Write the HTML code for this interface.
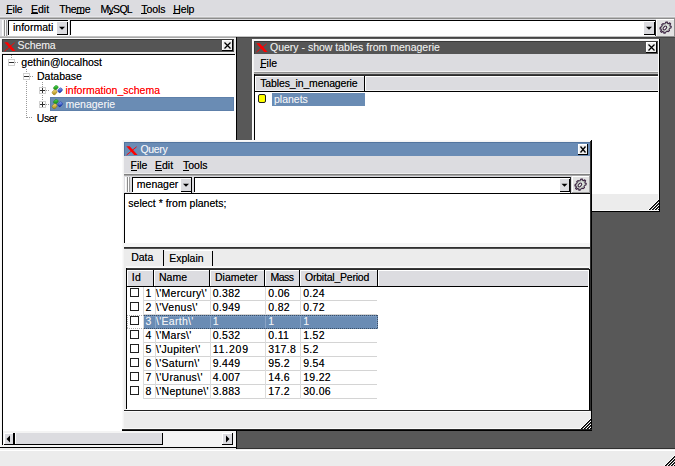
<!DOCTYPE html>
<html><head><meta charset="utf-8"><style>
html,body{margin:0;padding:0;}
body{width:675px;height:466px;overflow:hidden;position:relative;font-family:"Liberation Sans",sans-serif;}
body>div, body>svg{position:absolute;}
.t{white-space:pre;line-height:14px;}
u{text-decoration:underline;text-underline-offset:0.6px;}
</style></head><body>
<div style="left:0px;top:0px;width:675px;height:466px;background:#585858"></div>
<div style="left:0px;top:0px;width:675px;height:19px;background:#dcdce0"></div>
<div style="left:0px;top:16px;width:675px;height:1px;background:#e6e6ea"></div>
<div style="left:0px;top:17px;width:675px;height:1px;background:#bcbcbc"></div>
<div style="left:0px;top:18px;width:675px;height:1px;background:#8e8e8e"></div>
<div style="left:0px;top:19px;width:675px;height:18px;background:#dcdce0"></div>
<div style="left:0px;top:36px;width:675px;height:1px;background:#c4c4c4"></div>
<div style="left:237px;top:37px;width:438px;height:1px;background:#444444"></div>
<div class="t" style="left:6.2px;top:1.76px;color:#000;font-size:10.5px;text-shadow:0 0 0.5px rgba(0,0,0,0.55);letter-spacing:-0.15px">File</div>
<div style="left:6.2px;top:13px;width:5.8px;height:1px;background:#000"></div>
<div class="t" style="left:31px;top:1.76px;color:#000;font-size:10.5px;text-shadow:0 0 0.5px rgba(0,0,0,0.55);">Edit</div>
<div style="left:31.0px;top:13px;width:6.6px;height:1px;background:#000"></div>
<div class="t" style="left:59.3px;top:1.76px;color:#000;font-size:10.5px;text-shadow:0 0 0.5px rgba(0,0,0,0.55);letter-spacing:-0.35px">Theme</div>
<div style="left:76.3px;top:13px;width:8.1px;height:1px;background:#000"></div>
<div class="t" style="left:100.5px;top:1.76px;color:#000;font-size:10.5px;text-shadow:0 0 0.5px rgba(0,0,0,0.55);letter-spacing:-0.7px">MySQL</div>
<div style="left:108.6px;top:13px;width:4.1px;height:1px;background:#000"></div>
<div class="t" style="left:141.3px;top:1.76px;color:#000;font-size:10.5px;text-shadow:0 0 0.5px rgba(0,0,0,0.55);letter-spacing:-0.1px">Tools</div>
<div style="left:141.3px;top:13px;width:5.9px;height:1px;background:#000"></div>
<div class="t" style="left:173.3px;top:1.76px;color:#000;font-size:10.5px;text-shadow:0 0 0.5px rgba(0,0,0,0.55);letter-spacing:-0.15px">Help</div>
<div style="left:173.3px;top:13px;width:7.0px;height:1px;background:#000"></div>
<div style="left:2px;top:20px;width:1px;height:16px;background:#ffffff"></div>
<div style="left:3px;top:20px;width:1px;height:16px;background:#f0f0f0"></div>
<div style="left:4px;top:20px;width:1px;height:16px;background:#8c8c8c"></div>
<div style="left:5px;top:20px;width:1px;height:16px;background:#ffffff"></div>
<div style="left:6px;top:20px;width:1px;height:16px;background:#9c9c9c"></div>
<div style="left:8px;top:20px;width:61px;height:16px;background:#fff"></div>
<div style="left:8px;top:20px;width:61px;height:1px;background:#000"></div>
<div style="left:8px;top:20px;width:1px;height:16px;background:#000"></div>
<div style="left:8px;top:35px;width:61px;height:1px;background:#fff"></div>
<div style="left:68px;top:20px;width:1px;height:16px;background:#fff"></div>
<div class="t" style="left:13px;top:19.96px;color:#000;font-size:10.5px;text-shadow:0 0 0.5px rgba(0,0,0,0.55);">informati</div>
<div style="left:57px;top:22px;width:11px;height:13px;background:#dcdce0"></div>
<div style="left:57px;top:34px;width:11px;height:1px;background:#000"></div>
<div style="left:67px;top:22px;width:1px;height:13px;background:#000"></div>
<svg style="left:57px;top:22px" width="11" height="13" viewBox="0 0 11 13"><path d="M2.0 4.7 L8.0 4.7 L5.0 7.7 Z" fill="#000"/></svg>
<div style="left:70px;top:20px;width:586px;height:16px;background:#fff"></div>
<div style="left:70px;top:20px;width:586px;height:1px;background:#000"></div>
<div style="left:70px;top:20px;width:1px;height:16px;background:#000"></div>
<div style="left:70px;top:35px;width:586px;height:1px;background:#fff"></div>
<div style="left:655px;top:20px;width:1px;height:16px;background:#fff"></div>
<div style="left:655px;top:20px;width:1px;height:16px;background:#202020"></div>
<div style="left:644px;top:22px;width:11px;height:13px;background:#dcdce0"></div>
<div style="left:644px;top:34px;width:11px;height:1px;background:#000"></div>
<div style="left:654px;top:22px;width:1px;height:13px;background:#000"></div>
<svg style="left:644px;top:22px" width="11" height="13" viewBox="0 0 11 13"><path d="M2.0 4.7 L8.0 4.7 L5.0 7.7 Z" fill="#000"/></svg>
<div style="left:656px;top:19px;width:19px;height:18px;background:#e2e2e2"></div>
<div style="left:656px;top:19px;width:19px;height:1px;background:#fff"></div>
<div style="left:656px;top:19px;width:1px;height:18px;background:#fff"></div>
<div style="left:656px;top:36px;width:19px;height:1px;background:#909090"></div>
<div style="left:674px;top:19px;width:1px;height:18px;background:#909090"></div>
<svg style="left:659px;top:21px" width="14" height="14" viewBox="0 0 14 14"><polygon points="11.14,2.37 11.34,2.61 11.52,2.86 11.10,3.52 10.64,4.13 10.73,4.36 10.80,4.60 10.85,4.85 10.88,5.10 11.53,5.18 12.15,5.35 12.13,5.70 12.08,6.05 12.01,6.41 11.91,6.76 11.20,7.06 10.51,7.28 10.38,7.55 10.24,7.81 10.08,8.08 9.91,8.33 10.18,8.87 10.38,9.47 10.10,9.76 9.81,10.05 9.51,10.32 9.19,10.57 8.61,10.33 8.09,10.03 7.83,10.18 7.55,10.32 7.28,10.44 7.00,10.55 6.73,11.23 6.39,11.91 6.02,11.98 5.66,12.03 5.31,12.05 4.96,12.05 4.84,11.42 4.80,10.77 4.55,10.72 4.31,10.64 4.07,10.56 3.85,10.45 3.21,10.87 2.52,11.24 2.28,11.04 2.06,10.83 1.86,10.59 1.68,10.34 2.10,9.68 2.56,9.07 2.47,8.84 2.40,8.60 2.35,8.35 2.32,8.10 1.67,8.02 1.05,7.85 1.07,7.50 1.12,7.15 1.19,6.79 1.29,6.44 2.00,6.14 2.69,5.92 2.82,5.65 2.96,5.39 3.12,5.12 3.29,4.87 3.02,4.33 2.82,3.73 3.10,3.44 3.39,3.15 3.69,2.88 4.01,2.63 4.59,2.87 5.11,3.17 5.37,3.02 5.65,2.88 5.92,2.76 6.20,2.65 6.47,1.97 6.81,1.29 7.18,1.22 7.54,1.17 7.89,1.15 8.24,1.15 8.36,1.78 8.40,2.43 8.65,2.48 8.89,2.56 9.13,2.64 9.35,2.75 9.99,2.33 10.68,1.96 10.92,2.16" fill="#dfe5df" stroke="#3c2442" stroke-width="1.25"/><ellipse cx="6.6" cy="6.6" rx="4.2" ry="3.2" transform="rotate(-43 6.6 6.6)" fill="none" stroke="#c0c8c0" stroke-width="0.8"/><ellipse cx="5.9" cy="7.0" rx="2.3" ry="1.3" transform="rotate(-48 5.9 7.0)" fill="#f4f6f4" stroke="#3a2440" stroke-width="1.1"/></svg>
<div style="left:0px;top:448px;width:675px;height:1px;background:#303030"></div>
<div style="left:0px;top:449px;width:675px;height:17px;background:#ececec"></div>
<div style="left:0px;top:450px;width:675px;height:1px;background:#ffffff"></div>
<svg style="left:664px;top:455px" width="11" height="11" viewBox="0 0 11 11"><g shape-rendering="crispEdges"><rect x="10" y="0" width="1" height="1" fill="#ffffff"/><rect x="9" y="1" width="1" height="1" fill="#ffffff"/><rect x="10" y="1" width="1" height="1" fill="#000000"/><rect x="8" y="2" width="1" height="1" fill="#ffffff"/><rect x="9" y="2" width="1" height="1" fill="#000000"/><rect x="10" y="2" width="1" height="1" fill="#404040"/><rect x="7" y="3" width="1" height="1" fill="#ffffff"/><rect x="8" y="3" width="1" height="1" fill="#000000"/><rect x="9" y="3" width="1" height="1" fill="#404040"/><rect x="10" y="3" width="1" height="1" fill="#ffffff"/><rect x="6" y="4" width="1" height="1" fill="#ffffff"/><rect x="7" y="4" width="1" height="1" fill="#000000"/><rect x="8" y="4" width="1" height="1" fill="#404040"/><rect x="9" y="4" width="1" height="1" fill="#ffffff"/><rect x="10" y="4" width="1" height="1" fill="#000000"/><rect x="5" y="5" width="1" height="1" fill="#ffffff"/><rect x="6" y="5" width="1" height="1" fill="#000000"/><rect x="7" y="5" width="1" height="1" fill="#404040"/><rect x="8" y="5" width="1" height="1" fill="#ffffff"/><rect x="9" y="5" width="1" height="1" fill="#000000"/><rect x="10" y="5" width="1" height="1" fill="#404040"/><rect x="4" y="6" width="1" height="1" fill="#ffffff"/><rect x="5" y="6" width="1" height="1" fill="#000000"/><rect x="6" y="6" width="1" height="1" fill="#404040"/><rect x="7" y="6" width="1" height="1" fill="#ffffff"/><rect x="8" y="6" width="1" height="1" fill="#000000"/><rect x="9" y="6" width="1" height="1" fill="#404040"/><rect x="10" y="6" width="1" height="1" fill="#ffffff"/><rect x="3" y="7" width="1" height="1" fill="#ffffff"/><rect x="4" y="7" width="1" height="1" fill="#000000"/><rect x="5" y="7" width="1" height="1" fill="#404040"/><rect x="6" y="7" width="1" height="1" fill="#ffffff"/><rect x="7" y="7" width="1" height="1" fill="#000000"/><rect x="8" y="7" width="1" height="1" fill="#404040"/><rect x="9" y="7" width="1" height="1" fill="#ffffff"/><rect x="10" y="7" width="1" height="1" fill="#000000"/><rect x="2" y="8" width="1" height="1" fill="#ffffff"/><rect x="3" y="8" width="1" height="1" fill="#000000"/><rect x="4" y="8" width="1" height="1" fill="#404040"/><rect x="5" y="8" width="1" height="1" fill="#ffffff"/><rect x="6" y="8" width="1" height="1" fill="#000000"/><rect x="7" y="8" width="1" height="1" fill="#404040"/><rect x="8" y="8" width="1" height="1" fill="#ffffff"/><rect x="9" y="8" width="1" height="1" fill="#000000"/><rect x="10" y="8" width="1" height="1" fill="#404040"/><rect x="1" y="9" width="1" height="1" fill="#ffffff"/><rect x="2" y="9" width="1" height="1" fill="#000000"/><rect x="3" y="9" width="1" height="1" fill="#404040"/><rect x="4" y="9" width="1" height="1" fill="#ffffff"/><rect x="5" y="9" width="1" height="1" fill="#000000"/><rect x="6" y="9" width="1" height="1" fill="#404040"/><rect x="7" y="9" width="1" height="1" fill="#ffffff"/><rect x="8" y="9" width="1" height="1" fill="#000000"/><rect x="9" y="9" width="1" height="1" fill="#404040"/><rect x="10" y="9" width="1" height="1" fill="#ffffff"/><rect x="0" y="10" width="1" height="1" fill="#ffffff"/><rect x="1" y="10" width="1" height="1" fill="#000000"/><rect x="2" y="10" width="1" height="1" fill="#404040"/><rect x="3" y="10" width="1" height="1" fill="#ffffff"/><rect x="4" y="10" width="1" height="1" fill="#000000"/><rect x="5" y="10" width="1" height="1" fill="#404040"/><rect x="6" y="10" width="1" height="1" fill="#ffffff"/><rect x="7" y="10" width="1" height="1" fill="#000000"/><rect x="8" y="10" width="1" height="1" fill="#404040"/><rect x="9" y="10" width="1" height="1" fill="#ffffff"/><rect x="10" y="10" width="1" height="1" fill="#000000"/></g></svg>
<div style="left:0px;top:37px;width:237px;height:412px;background:#ececec"></div>
<div style="left:0px;top:37px;width:237px;height:1px;background:#a8a8a8"></div>
<div style="left:0px;top:38px;width:237px;height:1px;background:#fafafa"></div>
<div style="left:0px;top:38px;width:1px;height:410px;background:#fafafa"></div>
<div style="left:1px;top:38px;width:1px;height:410px;background:#f4f4f4"></div>
<div style="left:236px;top:37px;width:1px;height:412px;background:#000"></div>
<div style="left:0px;top:447px;width:237px;height:1px;background:#000"></div>
<div style="left:2px;top:39px;width:232px;height:13px;background:#555555"></div>
<div style="left:2px;top:39px;width:232px;height:1px;background:#3a3a3a"></div>
<div style="left:2px;top:39px;width:1px;height:13px;background:#3a3a3a"></div>
<svg style="left:3.5px;top:41.5px" width="12" height="10" viewBox="0 0 12 10"><path d="M0.3 0.3 L3.7 0.3 L11.6 9.1 L8.2 9.1 Z" fill="#f00"/><path d="M10.6 0.8 L0.6 9" stroke="#f00" stroke-width="0.95"/></svg>
<div class="t" style="left:17.6px;top:38.36px;color:#e8e8e8;font-size:10.5px;text-shadow:0 0 0.5px rgba(232,232,232,0.55);letter-spacing:-0.1px">Schema</div>
<div style="left:222px;top:40px;width:11px;height:11px;background:#eeeeee"></div>
<div style="left:222px;top:40px;width:11px;height:1px;background:#fff"></div>
<div style="left:222px;top:40px;width:1px;height:11px;background:#fff"></div>
<div style="left:222px;top:50px;width:11px;height:1px;background:#000"></div>
<div style="left:232px;top:40px;width:1px;height:11px;background:#000"></div>
<svg style="left:222px;top:40px" width="11" height="11" viewBox="0 0 11 11"><path d="M2.5 2.5 L8.5 8.5 M8.5 2.5 L2.5 8.5" stroke="#000" stroke-width="1.3"/></svg>
<div style="left:2px;top:54px;width:234px;height:391px;background:#fff"></div>
<div style="left:2px;top:52px;width:232px;height:1px;background:#f4f4f4"></div>
<div style="left:2px;top:53px;width:232px;height:1px;background:#e8e8e8"></div>
<div style="left:2px;top:54px;width:233px;height:1px;background:#000"></div>
<div style="left:2px;top:54px;width:1px;height:391px;background:#000"></div>
<div style="left:11px;top:55px;width:1px;height:4px;background:repeating-linear-gradient(to bottom,#9a9a9a 0 1px,transparent 1px 2px)"></div>
<div style="left:8px;top:59px;width:7px;height:7px;background:#fff;border:1px solid #d0d0d0;box-sizing:border-box"></div>
<div style="left:9px;top:62px;width:5px;height:1px;background:#303030"></div>
<div style="left:15px;top:62px;width:4px;height:1px;background:repeating-linear-gradient(to right,#9a9a9a 0 1px,transparent 1px 2px)"></div>
<div class="t" style="left:21.3px;top:55.06px;color:#000;font-size:10.5px;text-shadow:0 0 0.5px rgba(0,0,0,0.55);">gethin@localhost</div>
<div style="left:26px;top:69px;width:1px;height:4px;background:repeating-linear-gradient(to bottom,#9a9a9a 0 1px,transparent 1px 2px)"></div>
<div style="left:23px;top:73px;width:7px;height:7px;background:#fff;border:1px solid #d0d0d0;box-sizing:border-box"></div>
<div style="left:24px;top:76px;width:5px;height:1px;background:#303030"></div>
<div style="left:30px;top:76px;width:4px;height:1px;background:repeating-linear-gradient(to right,#9a9a9a 0 1px,transparent 1px 2px)"></div>
<div class="t" style="left:37px;top:68.86px;color:#000;font-size:10.5px;text-shadow:0 0 0.5px rgba(0,0,0,0.55);">Database</div>
<div style="left:26px;top:81px;width:1px;height:37px;background:repeating-linear-gradient(to bottom,#9a9a9a 0 1px,transparent 1px 2px)"></div>
<div style="left:27px;top:117px;width:6px;height:1px;background:repeating-linear-gradient(to right,#9a9a9a 0 1px,transparent 1px 2px)"></div>
<div style="left:42px;top:82px;width:1px;height:5px;background:repeating-linear-gradient(to bottom,#9a9a9a 0 1px,transparent 1px 2px)"></div>
<div style="left:39px;top:87px;width:7px;height:7px;background:#fff;border:1px solid #d0d0d0;box-sizing:border-box"></div>
<div style="left:40px;top:90px;width:5px;height:1px;background:#303030"></div>
<div style="left:42px;top:88px;width:1px;height:5px;background:#303030"></div>
<div style="left:46px;top:90px;width:4px;height:1px;background:repeating-linear-gradient(to right,#9a9a9a 0 1px,transparent 1px 2px)"></div>
<div style="left:42px;top:95px;width:1px;height:6px;background:repeating-linear-gradient(to bottom,#9a9a9a 0 1px,transparent 1px 2px)"></div>
<div style="left:39px;top:101px;width:7px;height:7px;background:#fff;border:1px solid #d0d0d0;box-sizing:border-box"></div>
<div style="left:40px;top:104px;width:5px;height:1px;background:#303030"></div>
<div style="left:42px;top:102px;width:1px;height:5px;background:#303030"></div>
<div style="left:46px;top:104px;width:4px;height:1px;background:repeating-linear-gradient(to right,#9a9a9a 0 1px,transparent 1px 2px)"></div>
<svg style="left:50.5px;top:85px" width="13" height="12" viewBox="0 0 13 12"><defs><linearGradient id="gg" x1="0" y1="0" x2="1" y2="1"><stop offset="0" stop-color="#5ee05e"/><stop offset="1" stop-color="#008000"/></linearGradient><linearGradient id="gb" x1="0" y1="0" x2="1" y2="1"><stop offset="0" stop-color="#9ab8ff"/><stop offset="1" stop-color="#0020a0"/></linearGradient><linearGradient id="gy" x1="0" y1="0" x2="1" y2="1"><stop offset="0" stop-color="#ffe890"/><stop offset="1" stop-color="#a08000"/></linearGradient></defs><rect x="3.05" y="0.25" width="3.6" height="4.8" rx="1.5" transform="rotate(45 4.85 2.65)" fill="url(#gg)" stroke="#107010" stroke-width="0.4"/><rect x="7.3" y="2.85" width="3.6" height="4.8" rx="1.5" transform="rotate(45 9.1 5.25)" fill="url(#gb)" stroke="#001890" stroke-width="0.4"/><rect x="1.6" y="4.7" width="4" height="5" rx="1.7" transform="rotate(45 3.6 7.2)" fill="url(#gy)" stroke="#806000" stroke-width="0.4"/></svg>
<div class="t" style="left:65.5px;top:82.96px;color:#ff0000;font-size:10.5px;text-shadow:0 0 0.5px rgba(255,0,0,0.55);">information_schema</div>
<div style="left:50px;top:97px;width:184px;height:14px;background:#6a8cb4;border:1px solid #5e80aa;box-sizing:border-box"></div>
<svg style="left:50.5px;top:99px" width="13" height="12" viewBox="0 0 13 12"><defs><linearGradient id="gg" x1="0" y1="0" x2="1" y2="1"><stop offset="0" stop-color="#5ee05e"/><stop offset="1" stop-color="#008000"/></linearGradient><linearGradient id="gb" x1="0" y1="0" x2="1" y2="1"><stop offset="0" stop-color="#9ab8ff"/><stop offset="1" stop-color="#0020a0"/></linearGradient><linearGradient id="gy" x1="0" y1="0" x2="1" y2="1"><stop offset="0" stop-color="#ffe890"/><stop offset="1" stop-color="#a08000"/></linearGradient></defs><rect x="3.05" y="0.25" width="3.6" height="4.8" rx="1.5" transform="rotate(45 4.85 2.65)" fill="url(#gg)" stroke="#107010" stroke-width="0.4"/><rect x="7.3" y="2.85" width="3.6" height="4.8" rx="1.5" transform="rotate(45 9.1 5.25)" fill="url(#gb)" stroke="#001890" stroke-width="0.4"/><rect x="1.6" y="4.7" width="4" height="5" rx="1.7" transform="rotate(45 3.6 7.2)" fill="url(#gy)" stroke="#806000" stroke-width="0.4"/></svg>
<div class="t" style="left:65.5px;top:96.96px;color:#eef0f4;font-size:10.5px;text-shadow:0 0 0.5px rgba(238,240,244,0.55);">menagerie</div>
<div class="t" style="left:36.8px;top:110.86px;color:#000;font-size:10.5px;text-shadow:0 0 0.5px rgba(0,0,0,0.55);letter-spacing:-0.45px">User</div>
<div style="left:3px;top:431px;width:233px;height:16px;background:#f4f4f4"></div>
<div style="left:4px;top:433px;width:10px;height:12px;background:#dcdce0"></div>
<div style="left:4px;top:433px;width:10px;height:1px;background:#fff"></div>
<div style="left:4px;top:433px;width:1px;height:12px;background:#fff"></div>
<div style="left:4px;top:444px;width:10px;height:1px;background:#000"></div>
<div style="left:13px;top:433px;width:1px;height:12px;background:#000"></div>
<svg style="left:4px;top:433px" width="10" height="12" viewBox="0 0 10 12"><path d="M2.5 6 L6 2.5 L6 9.5 Z" fill="#000"/></svg>
<div style="left:14px;top:433px;width:149px;height:12px;background:#dcdce0"></div>
<div style="left:14px;top:433px;width:1px;height:12px;background:#000"></div>
<div style="left:15px;top:433px;width:1px;height:12px;background:#fff"></div>
<div style="left:14px;top:444px;width:149px;height:1px;background:#000"></div>
<div style="left:162px;top:433px;width:1px;height:12px;background:#000"></div>
<div style="left:222px;top:433px;width:11px;height:12px;background:#dcdce0"></div>
<div style="left:222px;top:433px;width:11px;height:1px;background:#fff"></div>
<div style="left:222px;top:433px;width:1px;height:12px;background:#fff"></div>
<div style="left:222px;top:444px;width:11px;height:1px;background:#000"></div>
<div style="left:232px;top:433px;width:1px;height:12px;background:#000"></div>
<svg style="left:222px;top:433px" width="11" height="12" viewBox="0 0 11 12"><path d="M7.5 6 L4 2.5 L4 9.5 Z" fill="#000"/></svg>
<div style="left:252px;top:39px;width:408px;height:173px;background:#ececec"></div>
<div style="left:252px;top:39px;width:407px;height:1px;background:#fafafa"></div>
<div style="left:252px;top:40px;width:407px;height:1px;background:#f4f4f4"></div>
<div style="left:252px;top:39px;width:1px;height:172px;background:#fafafa"></div>
<div style="left:253px;top:39px;width:1px;height:172px;background:#f4f4f4"></div>
<div style="left:659px;top:39px;width:1px;height:173px;background:#000"></div>
<div style="left:658px;top:40px;width:1px;height:171px;background:#fafafa"></div>
<div style="left:252px;top:211px;width:408px;height:1px;background:#000"></div>
<div style="left:253px;top:210px;width:406px;height:1px;background:#fafafa"></div>
<div style="left:254px;top:41px;width:404px;height:13px;background:#555555"></div>
<div style="left:254px;top:41px;width:404px;height:1px;background:#3a3a3a"></div>
<div style="left:254px;top:41px;width:1px;height:13px;background:#3a3a3a"></div>
<svg style="left:255.5px;top:43px" width="12" height="10" viewBox="0 0 12 10"><path d="M0.3 0.3 L3.7 0.3 L11.6 9.1 L8.2 9.1 Z" fill="#f00"/><path d="M10.6 0.8 L0.6 9" stroke="#f00" stroke-width="0.95"/></svg>
<div class="t" style="left:270px;top:39.96px;color:#e8e8e8;font-size:10.5px;text-shadow:0 0 0.5px rgba(232,232,232,0.55);">Query - show tables from menagerie</div>
<div style="left:646px;top:42px;width:11px;height:11px;background:#eeeeee"></div>
<div style="left:646px;top:42px;width:11px;height:1px;background:#fff"></div>
<div style="left:646px;top:42px;width:1px;height:11px;background:#fff"></div>
<div style="left:646px;top:52px;width:11px;height:1px;background:#000"></div>
<div style="left:656px;top:42px;width:1px;height:11px;background:#000"></div>
<svg style="left:646px;top:42px" width="11" height="11" viewBox="0 0 11 11"><path d="M2.5 2.5 L8.5 8.5 M8.5 2.5 L2.5 8.5" stroke="#000" stroke-width="1.3"/></svg>
<div style="left:254px;top:54px;width:404px;height:17px;background:#dcdce0"></div>
<div class="t" style="left:260.2px;top:55.66px;color:#000;font-size:10.5px;text-shadow:0 0 0.5px rgba(0,0,0,0.55);">File</div>
<div style="left:260.2px;top:67px;width:6.0px;height:1px;background:#000"></div>
<div style="left:254px;top:71px;width:404px;height:1px;background:#f0f0f0"></div>
<div style="left:254px;top:72px;width:404px;height:1px;background:#8e8e8e"></div>
<div style="left:254px;top:73px;width:404px;height:1px;background:#b8b8b8"></div>
<div style="left:254px;top:75px;width:404px;height:119px;background:#fff"></div>
<div style="left:254px;top:74px;width:404px;height:1px;background:#404040"></div>
<div style="left:254px;top:75px;width:404px;height:1px;background:#2a2a2a"></div>
<div style="left:254px;top:74px;width:1px;height:120px;background:#000"></div>
<div style="left:255px;top:76px;width:403px;height:15px;background:#dcdce0"></div>
<div style="left:255px;top:76px;width:403px;height:1px;background:#fff"></div>
<div style="left:255px;top:90px;width:403px;height:1px;background:#f4f4f4"></div>
<div style="left:255px;top:91px;width:403px;height:1px;background:#000"></div>
<div style="left:255px;top:76px;width:1px;height:15px;background:#fff"></div>
<div style="left:364px;top:76px;width:1px;height:15px;background:#000"></div>
<div style="left:365px;top:76px;width:1px;height:15px;background:#fff"></div>
<div class="t" style="left:260.2px;top:76.26px;color:#000;font-size:10.5px;text-shadow:0 0 0.5px rgba(0,0,0,0.55);letter-spacing:-0.13px">Tables_in_menagerie</div>
<div style="left:258px;top:94px;width:8px;height:9px;background:#ffff00;border:1px solid #202020;box-sizing:border-box;border-radius:2px"></div>
<div style="left:272px;top:93px;width:93px;height:13px;background:#6a8cb4"></div>
<div class="t" style="left:274px;top:92.36px;color:#eef0f4;font-size:10.5px;text-shadow:0 0 0.5px rgba(238,240,244,0.55);">planets</div>
<svg style="left:648px;top:199px" width="11" height="11" viewBox="0 0 11 11"><g shape-rendering="crispEdges"><rect x="10" y="0" width="1" height="1" fill="#ffffff"/><rect x="9" y="1" width="1" height="1" fill="#ffffff"/><rect x="10" y="1" width="1" height="1" fill="#000000"/><rect x="8" y="2" width="1" height="1" fill="#ffffff"/><rect x="9" y="2" width="1" height="1" fill="#000000"/><rect x="10" y="2" width="1" height="1" fill="#404040"/><rect x="7" y="3" width="1" height="1" fill="#ffffff"/><rect x="8" y="3" width="1" height="1" fill="#000000"/><rect x="9" y="3" width="1" height="1" fill="#404040"/><rect x="10" y="3" width="1" height="1" fill="#ffffff"/><rect x="6" y="4" width="1" height="1" fill="#ffffff"/><rect x="7" y="4" width="1" height="1" fill="#000000"/><rect x="8" y="4" width="1" height="1" fill="#404040"/><rect x="9" y="4" width="1" height="1" fill="#ffffff"/><rect x="10" y="4" width="1" height="1" fill="#000000"/><rect x="5" y="5" width="1" height="1" fill="#ffffff"/><rect x="6" y="5" width="1" height="1" fill="#000000"/><rect x="7" y="5" width="1" height="1" fill="#404040"/><rect x="8" y="5" width="1" height="1" fill="#ffffff"/><rect x="9" y="5" width="1" height="1" fill="#000000"/><rect x="10" y="5" width="1" height="1" fill="#404040"/><rect x="4" y="6" width="1" height="1" fill="#ffffff"/><rect x="5" y="6" width="1" height="1" fill="#000000"/><rect x="6" y="6" width="1" height="1" fill="#404040"/><rect x="7" y="6" width="1" height="1" fill="#ffffff"/><rect x="8" y="6" width="1" height="1" fill="#000000"/><rect x="9" y="6" width="1" height="1" fill="#404040"/><rect x="10" y="6" width="1" height="1" fill="#ffffff"/><rect x="3" y="7" width="1" height="1" fill="#ffffff"/><rect x="4" y="7" width="1" height="1" fill="#000000"/><rect x="5" y="7" width="1" height="1" fill="#404040"/><rect x="6" y="7" width="1" height="1" fill="#ffffff"/><rect x="7" y="7" width="1" height="1" fill="#000000"/><rect x="8" y="7" width="1" height="1" fill="#404040"/><rect x="9" y="7" width="1" height="1" fill="#ffffff"/><rect x="10" y="7" width="1" height="1" fill="#000000"/><rect x="2" y="8" width="1" height="1" fill="#ffffff"/><rect x="3" y="8" width="1" height="1" fill="#000000"/><rect x="4" y="8" width="1" height="1" fill="#404040"/><rect x="5" y="8" width="1" height="1" fill="#ffffff"/><rect x="6" y="8" width="1" height="1" fill="#000000"/><rect x="7" y="8" width="1" height="1" fill="#404040"/><rect x="8" y="8" width="1" height="1" fill="#ffffff"/><rect x="9" y="8" width="1" height="1" fill="#000000"/><rect x="10" y="8" width="1" height="1" fill="#404040"/><rect x="1" y="9" width="1" height="1" fill="#ffffff"/><rect x="2" y="9" width="1" height="1" fill="#000000"/><rect x="3" y="9" width="1" height="1" fill="#404040"/><rect x="4" y="9" width="1" height="1" fill="#ffffff"/><rect x="5" y="9" width="1" height="1" fill="#000000"/><rect x="6" y="9" width="1" height="1" fill="#404040"/><rect x="7" y="9" width="1" height="1" fill="#ffffff"/><rect x="8" y="9" width="1" height="1" fill="#000000"/><rect x="9" y="9" width="1" height="1" fill="#404040"/><rect x="10" y="9" width="1" height="1" fill="#ffffff"/><rect x="0" y="10" width="1" height="1" fill="#ffffff"/><rect x="1" y="10" width="1" height="1" fill="#000000"/><rect x="2" y="10" width="1" height="1" fill="#404040"/><rect x="3" y="10" width="1" height="1" fill="#ffffff"/><rect x="4" y="10" width="1" height="1" fill="#000000"/><rect x="5" y="10" width="1" height="1" fill="#404040"/><rect x="6" y="10" width="1" height="1" fill="#ffffff"/><rect x="7" y="10" width="1" height="1" fill="#000000"/><rect x="8" y="10" width="1" height="1" fill="#404040"/><rect x="9" y="10" width="1" height="1" fill="#ffffff"/><rect x="10" y="10" width="1" height="1" fill="#000000"/></g></svg>
<div style="left:122px;top:140px;width:470px;height:291px;background:#ececec"></div>
<div style="left:122px;top:140px;width:469px;height:1px;background:#fafafa"></div>
<div style="left:122px;top:141px;width:469px;height:1px;background:#f4f4f4"></div>
<div style="left:122px;top:140px;width:1px;height:290px;background:#fafafa"></div>
<div style="left:123px;top:140px;width:1px;height:290px;background:#f4f4f4"></div>
<div style="left:591px;top:140px;width:1px;height:291px;background:#000"></div>
<div style="left:590px;top:141px;width:1px;height:270px;background:#303030"></div>
<div style="left:122px;top:430px;width:470px;height:1px;background:#000"></div>
<div style="left:122px;top:429px;width:470px;height:1px;background:#282828"></div>
<div style="left:123px;top:428px;width:467px;height:1px;background:#fafafa"></div>
<div style="left:124px;top:142px;width:466px;height:14px;background:#6a8cb5"></div>
<div style="left:124px;top:142px;width:466px;height:1px;background:#52749e"></div>
<div style="left:124px;top:142px;width:1px;height:14px;background:#52749e"></div>
<svg style="left:126px;top:145.5px" width="12" height="10" viewBox="0 0 12 10"><path d="M0.3 0.3 L3.7 0.3 L11.6 9.1 L8.2 9.1 Z" fill="#f00"/><path d="M10.6 0.8 L0.6 9" stroke="#f00" stroke-width="0.95"/></svg>
<div class="t" style="left:140.5px;top:142.36px;color:#f0f2f6;font-size:10.5px;text-shadow:0 0 0.5px rgba(240,242,246,0.55);letter-spacing:-0.35px">Query</div>
<div style="left:578px;top:144px;width:10px;height:11px;background:#eeeeee"></div>
<div style="left:578px;top:144px;width:10px;height:1px;background:#fff"></div>
<div style="left:578px;top:144px;width:1px;height:11px;background:#fff"></div>
<div style="left:578px;top:154px;width:10px;height:1px;background:#000"></div>
<div style="left:587px;top:144px;width:1px;height:11px;background:#000"></div>
<svg style="left:578px;top:144px" width="10" height="11" viewBox="0 0 10 11"><path d="M2.5 2.5 L7.5 8.5 M7.5 2.5 L2.5 8.5" stroke="#000" stroke-width="1.3"/></svg>
<div style="left:124px;top:156px;width:466px;height:17px;background:#dcdce0"></div>
<div class="t" style="left:130.5px;top:157.66px;color:#000;font-size:10.5px;text-shadow:0 0 0.5px rgba(0,0,0,0.55);">File</div>
<div style="left:130.5px;top:170px;width:6.0px;height:1px;background:#000"></div>
<div class="t" style="left:155px;top:157.66px;color:#000;font-size:10.5px;text-shadow:0 0 0.5px rgba(0,0,0,0.55);">Edit</div>
<div style="left:155.0px;top:170px;width:6.6px;height:1px;background:#000"></div>
<div class="t" style="left:183px;top:157.66px;color:#000;font-size:10.5px;text-shadow:0 0 0.5px rgba(0,0,0,0.55);">Tools</div>
<div style="left:183.0px;top:170px;width:6.0px;height:1px;background:#000"></div>
<div style="left:124px;top:173px;width:466px;height:1px;background:#eeeeee"></div>
<div style="left:124px;top:174px;width:466px;height:1px;background:#808080"></div>
<div style="left:124px;top:175px;width:466px;height:1px;background:#a8a8a8"></div>
<div style="left:124px;top:176px;width:466px;height:17px;background:#dcdce0"></div>
<div style="left:125px;top:177px;width:1px;height:15px;background:#ffffff"></div>
<div style="left:126px;top:177px;width:1px;height:15px;background:#f0f0f0"></div>
<div style="left:127px;top:177px;width:1px;height:15px;background:#8c8c8c"></div>
<div style="left:128px;top:177px;width:1px;height:15px;background:#ffffff"></div>
<div style="left:129px;top:177px;width:1px;height:15px;background:#9c9c9c"></div>
<div style="left:132px;top:177px;width:60px;height:16px;background:#fff"></div>
<div style="left:132px;top:177px;width:60px;height:1px;background:#000"></div>
<div style="left:132px;top:177px;width:1px;height:16px;background:#000"></div>
<div style="left:132px;top:192px;width:60px;height:1px;background:#fff"></div>
<div style="left:191px;top:177px;width:1px;height:16px;background:#fff"></div>
<div style="left:191px;top:177px;width:1px;height:16px;background:#000"></div>
<div class="t" style="left:136.8px;top:177.36px;color:#000;font-size:10.5px;text-shadow:0 0 0.5px rgba(0,0,0,0.55);">menager</div>
<div style="left:181px;top:179px;width:11px;height:13px;background:#dcdce0"></div>
<div style="left:181px;top:191px;width:11px;height:1px;background:#000"></div>
<div style="left:191px;top:179px;width:1px;height:13px;background:#000"></div>
<svg style="left:181px;top:179px" width="11" height="13" viewBox="0 0 11 13"><path d="M2.0 4.7 L8.0 4.7 L5.0 7.7 Z" fill="#000"/></svg>
<div style="left:194px;top:177px;width:377px;height:16px;background:#fff"></div>
<div style="left:194px;top:177px;width:377px;height:1px;background:#000"></div>
<div style="left:194px;top:177px;width:1px;height:16px;background:#000"></div>
<div style="left:194px;top:192px;width:377px;height:1px;background:#fff"></div>
<div style="left:570px;top:177px;width:1px;height:16px;background:#fff"></div>
<div style="left:570px;top:177px;width:1px;height:16px;background:#202020"></div>
<div style="left:560px;top:179px;width:10px;height:13px;background:#dcdce0"></div>
<div style="left:560px;top:191px;width:10px;height:1px;background:#000"></div>
<div style="left:569px;top:179px;width:1px;height:13px;background:#000"></div>
<svg style="left:560px;top:179px" width="10" height="13" viewBox="0 0 10 13"><path d="M1.5 4.7 L7.5 4.7 L4.5 7.7 Z" fill="#000"/></svg>
<div style="left:572px;top:176px;width:18px;height:17px;background:#e2e2e2"></div>
<div style="left:572px;top:176px;width:18px;height:1px;background:#fff"></div>
<div style="left:572px;top:176px;width:1px;height:17px;background:#fff"></div>
<div style="left:572px;top:192px;width:18px;height:1px;background:#a0a0a0"></div>
<div style="left:589px;top:176px;width:1px;height:17px;background:#a0a0a0"></div>
<svg style="left:574px;top:178px" width="14" height="14" viewBox="0 0 14 14"><polygon points="11.14,2.37 11.34,2.61 11.52,2.86 11.10,3.52 10.64,4.13 10.73,4.36 10.80,4.60 10.85,4.85 10.88,5.10 11.53,5.18 12.15,5.35 12.13,5.70 12.08,6.05 12.01,6.41 11.91,6.76 11.20,7.06 10.51,7.28 10.38,7.55 10.24,7.81 10.08,8.08 9.91,8.33 10.18,8.87 10.38,9.47 10.10,9.76 9.81,10.05 9.51,10.32 9.19,10.57 8.61,10.33 8.09,10.03 7.83,10.18 7.55,10.32 7.28,10.44 7.00,10.55 6.73,11.23 6.39,11.91 6.02,11.98 5.66,12.03 5.31,12.05 4.96,12.05 4.84,11.42 4.80,10.77 4.55,10.72 4.31,10.64 4.07,10.56 3.85,10.45 3.21,10.87 2.52,11.24 2.28,11.04 2.06,10.83 1.86,10.59 1.68,10.34 2.10,9.68 2.56,9.07 2.47,8.84 2.40,8.60 2.35,8.35 2.32,8.10 1.67,8.02 1.05,7.85 1.07,7.50 1.12,7.15 1.19,6.79 1.29,6.44 2.00,6.14 2.69,5.92 2.82,5.65 2.96,5.39 3.12,5.12 3.29,4.87 3.02,4.33 2.82,3.73 3.10,3.44 3.39,3.15 3.69,2.88 4.01,2.63 4.59,2.87 5.11,3.17 5.37,3.02 5.65,2.88 5.92,2.76 6.20,2.65 6.47,1.97 6.81,1.29 7.18,1.22 7.54,1.17 7.89,1.15 8.24,1.15 8.36,1.78 8.40,2.43 8.65,2.48 8.89,2.56 9.13,2.64 9.35,2.75 9.99,2.33 10.68,1.96 10.92,2.16" fill="#dfe5df" stroke="#3c2442" stroke-width="1.25"/><ellipse cx="6.6" cy="6.6" rx="4.2" ry="3.2" transform="rotate(-43 6.6 6.6)" fill="none" stroke="#c0c8c0" stroke-width="0.8"/><ellipse cx="5.9" cy="7.0" rx="2.3" ry="1.3" transform="rotate(-48 5.9 7.0)" fill="#f4f6f4" stroke="#3a2440" stroke-width="1.1"/></svg>
<div style="left:124px;top:193px;width:466px;height:53px;background:#fff"></div>
<div style="left:124px;top:193px;width:466px;height:1px;background:#000"></div>
<div style="left:124px;top:193px;width:1px;height:50px;background:#000"></div>
<div class="t" style="left:128.3px;top:196.26px;color:#000;font-size:10.5px;text-shadow:0 0 0.5px rgba(0,0,0,0.55);">select * from planets;</div>
<div style="left:124px;top:243px;width:466px;height:4px;background:#f6f6f6"></div>
<div style="left:124px;top:247px;width:466px;height:1px;background:#303030"></div>
<div style="left:124px;top:248px;width:466px;height:1px;background:#505050"></div>
<div style="left:124px;top:249px;width:466px;height:19px;background:#ececec"></div>
<div style="left:163px;top:250px;width:1px;height:18px;background:#000"></div>
<div class="t" style="left:131.2px;top:250.36px;color:#000;font-size:10.5px;text-shadow:0 0 0.5px rgba(0,0,0,0.55);">Data</div>
<div style="left:165px;top:250px;width:47px;height:1px;background:#ffffff"></div>
<div class="t" style="left:169.2px;top:250.66px;color:#000;font-size:10.5px;text-shadow:0 0 0.5px rgba(0,0,0,0.55);">Explain</div>
<div style="left:212px;top:251px;width:1px;height:17px;background:#000"></div>
<div style="left:126px;top:269px;width:463px;height:141px;background:#fff"></div>
<div style="left:126px;top:268px;width:463px;height:1px;background:#3a3a3a"></div>
<div style="left:126px;top:269px;width:463px;height:1px;background:#2a2a2a"></div>
<div style="left:126px;top:268px;width:1px;height:141px;background:#000"></div>
<div style="left:126px;top:266px;width:463px;height:1px;background:#f6f6f6"></div>
<div style="left:126px;top:267px;width:463px;height:1px;background:#fafafa"></div>
<div style="left:589px;top:269px;width:1px;height:141px;background:#000"></div>
<div style="left:124px;top:410px;width:466px;height:1px;background:#202020"></div>
<div style="left:124px;top:411px;width:466px;height:1px;background:#fafafa"></div>
<div style="left:127px;top:270px;width:461px;height:16px;background:#dcdce0"></div>
<div style="left:127px;top:270px;width:461px;height:1px;background:#fff"></div>
<div style="left:127px;top:286px;width:461px;height:1px;background:#000"></div>
<div style="left:127px;top:270px;width:1px;height:16px;background:#fff"></div>
<div style="left:153px;top:270px;width:1px;height:16px;background:#000"></div>
<div style="left:154px;top:270px;width:1px;height:16px;background:#fff"></div>
<div style="left:209px;top:270px;width:1px;height:16px;background:#000"></div>
<div style="left:210px;top:270px;width:1px;height:16px;background:#fff"></div>
<div style="left:264px;top:270px;width:1px;height:16px;background:#000"></div>
<div style="left:265px;top:270px;width:1px;height:16px;background:#fff"></div>
<div style="left:299px;top:270px;width:1px;height:16px;background:#000"></div>
<div style="left:300px;top:270px;width:1px;height:16px;background:#fff"></div>
<div style="left:377px;top:270px;width:1px;height:16px;background:#000"></div>
<div style="left:378px;top:270px;width:1px;height:16px;background:#fff"></div>
<div class="t" style="left:131.7px;top:270.16px;color:#000;font-size:10.5px;text-shadow:0 0 0.5px rgba(0,0,0,0.55);letter-spacing:0.3px">Id</div>
<div class="t" style="left:159px;top:270.16px;color:#000;font-size:10.5px;text-shadow:0 0 0.5px rgba(0,0,0,0.55);">Name</div>
<div class="t" style="left:215px;top:270.16px;color:#000;font-size:10.5px;text-shadow:0 0 0.5px rgba(0,0,0,0.55);">Diameter</div>
<div class="t" style="left:270.5px;top:270.16px;color:#000;font-size:10.5px;text-shadow:0 0 0.5px rgba(0,0,0,0.55);letter-spacing:-0.5px">Mass</div>
<div class="t" style="left:305px;top:270.16px;color:#000;font-size:10.5px;text-shadow:0 0 0.5px rgba(0,0,0,0.55);letter-spacing:-0.22px">Orbital_Period</div>
<div style="left:143px;top:300px;width:234px;height:1px;background:#d4d4d4"></div>
<div style="left:143px;top:287px;width:1px;height:14px;background:#dcdcdc"></div>
<div style="left:155px;top:287px;width:1px;height:14px;background:#dcdcdc"></div>
<div style="left:210px;top:287px;width:1px;height:14px;background:#dcdcdc"></div>
<div style="left:265px;top:287px;width:1px;height:14px;background:#dcdcdc"></div>
<div style="left:300px;top:287px;width:1px;height:14px;background:#dcdcdc"></div>
<div style="left:130px;top:288px;width:9px;height:9px;background:#fff;border:1px solid #202020;box-sizing:border-box"></div>
<div class="t" style="left:145.5px;top:285.96px;color:#000;font-size:10.5px;text-shadow:0 0 0.5px rgba(0,0,0,0.55);">1</div>
<div class="t" style="left:156px;top:285.96px;color:#000;font-size:10.5px;text-shadow:0 0 0.5px rgba(0,0,0,0.55);letter-spacing:0.3px">\'Mercury\'</div>
<div class="t" style="left:212.7px;top:285.96px;color:#000;font-size:10.5px;text-shadow:0 0 0.5px rgba(0,0,0,0.55);letter-spacing:0.3px">0.382</div>
<div class="t" style="left:268.3px;top:285.96px;color:#000;font-size:10.5px;text-shadow:0 0 0.5px rgba(0,0,0,0.55);letter-spacing:0.3px">0.06</div>
<div class="t" style="left:303.2px;top:285.96px;color:#000;font-size:10.5px;text-shadow:0 0 0.5px rgba(0,0,0,0.55);letter-spacing:0.3px">0.24</div>
<div style="left:143px;top:314px;width:234px;height:1px;background:#d4d4d4"></div>
<div style="left:143px;top:301px;width:1px;height:14px;background:#dcdcdc"></div>
<div style="left:155px;top:301px;width:1px;height:14px;background:#dcdcdc"></div>
<div style="left:210px;top:301px;width:1px;height:14px;background:#dcdcdc"></div>
<div style="left:265px;top:301px;width:1px;height:14px;background:#dcdcdc"></div>
<div style="left:300px;top:301px;width:1px;height:14px;background:#dcdcdc"></div>
<div style="left:130px;top:302px;width:9px;height:9px;background:#fff;border:1px solid #202020;box-sizing:border-box"></div>
<div class="t" style="left:145.5px;top:299.96px;color:#000;font-size:10.5px;text-shadow:0 0 0.5px rgba(0,0,0,0.55);">2</div>
<div class="t" style="left:156px;top:299.96px;color:#000;font-size:10.5px;text-shadow:0 0 0.5px rgba(0,0,0,0.55);letter-spacing:0.3px">\'Venus\'</div>
<div class="t" style="left:212.7px;top:299.96px;color:#000;font-size:10.5px;text-shadow:0 0 0.5px rgba(0,0,0,0.55);letter-spacing:0.3px">0.949</div>
<div class="t" style="left:268.3px;top:299.96px;color:#000;font-size:10.5px;text-shadow:0 0 0.5px rgba(0,0,0,0.55);letter-spacing:0.3px">0.82</div>
<div class="t" style="left:303.2px;top:299.96px;color:#000;font-size:10.5px;text-shadow:0 0 0.5px rgba(0,0,0,0.55);letter-spacing:0.3px">0.72</div>
<div style="left:143px;top:328px;width:234px;height:1px;background:#d4d4d4"></div>
<div style="left:143px;top:315px;width:1px;height:14px;background:#dcdcdc"></div>
<div style="left:155px;top:315px;width:1px;height:14px;background:#dcdcdc"></div>
<div style="left:210px;top:315px;width:1px;height:14px;background:#dcdcdc"></div>
<div style="left:265px;top:315px;width:1px;height:14px;background:#dcdcdc"></div>
<div style="left:300px;top:315px;width:1px;height:14px;background:#dcdcdc"></div>
<div style="left:144px;top:315px;width:234px;height:14px;background:#6a8cb4"></div>
<div style="left:144px;top:316px;width:233px;height:1px;background:#7898be"></div>
<div style="left:376px;top:316px;width:1px;height:12px;background:#7898be"></div>
<div style="left:155px;top:316px;width:1px;height:12px;background:#8aa4c6"></div>
<div style="left:210px;top:316px;width:1px;height:12px;background:#8aa4c6"></div>
<div style="left:265px;top:316px;width:1px;height:12px;background:#8aa4c6"></div>
<div style="left:300px;top:316px;width:1px;height:12px;background:#8aa4c6"></div>
<div style="left:127px;top:315px;width:1px;height:14px;background:repeating-linear-gradient(to bottom,#b0b0b0 0 1px,transparent 1px 2px)"></div>
<div style="left:127px;top:315px;width:17px;height:1px;background:repeating-linear-gradient(to right,#a8a8a8 0 1px,transparent 1px 2px)"></div>
<div style="left:127px;top:328px;width:17px;height:1px;background:repeating-linear-gradient(to right,#b0b0b0 0 1px,transparent 1px 2px)"></div>
<div style="left:144px;top:315px;width:234px;height:1px;background:repeating-linear-gradient(to right,#3a4e66 0 1px,transparent 1px 2px)"></div>
<div style="left:144px;top:328px;width:234px;height:1px;background:repeating-linear-gradient(to right,#3a4e66 0 1px,transparent 1px 2px)"></div>
<div style="left:377px;top:315px;width:1px;height:14px;background:repeating-linear-gradient(to bottom,#3a4e66 0 1px,transparent 1px 2px)"></div>
<div style="left:130px;top:316px;width:9px;height:9px;background:#fff;border:1px solid #202020;box-sizing:border-box"></div>
<div class="t" style="left:145.5px;top:313.96px;color:#eef0f4;font-size:10.5px;text-shadow:0 0 0.5px rgba(238,240,244,0.55);">3</div>
<div class="t" style="left:156px;top:313.96px;color:#eef0f4;font-size:10.5px;text-shadow:0 0 0.5px rgba(238,240,244,0.55);letter-spacing:0.3px">\'Earth\'</div>
<div class="t" style="left:212.7px;top:313.96px;color:#eef0f4;font-size:10.5px;text-shadow:0 0 0.5px rgba(238,240,244,0.55);letter-spacing:0.3px">1</div>
<div class="t" style="left:268.3px;top:313.96px;color:#eef0f4;font-size:10.5px;text-shadow:0 0 0.5px rgba(238,240,244,0.55);letter-spacing:0.3px">1</div>
<div class="t" style="left:303.2px;top:313.96px;color:#eef0f4;font-size:10.5px;text-shadow:0 0 0.5px rgba(238,240,244,0.55);letter-spacing:0.3px">1</div>
<div style="left:143px;top:342px;width:234px;height:1px;background:#d4d4d4"></div>
<div style="left:143px;top:329px;width:1px;height:14px;background:#dcdcdc"></div>
<div style="left:155px;top:329px;width:1px;height:14px;background:#dcdcdc"></div>
<div style="left:210px;top:329px;width:1px;height:14px;background:#dcdcdc"></div>
<div style="left:265px;top:329px;width:1px;height:14px;background:#dcdcdc"></div>
<div style="left:300px;top:329px;width:1px;height:14px;background:#dcdcdc"></div>
<div style="left:130px;top:330px;width:9px;height:9px;background:#fff;border:1px solid #202020;box-sizing:border-box"></div>
<div class="t" style="left:145.5px;top:327.96px;color:#000;font-size:10.5px;text-shadow:0 0 0.5px rgba(0,0,0,0.55);">4</div>
<div class="t" style="left:156px;top:327.96px;color:#000;font-size:10.5px;text-shadow:0 0 0.5px rgba(0,0,0,0.55);letter-spacing:0.3px">\'Mars\'</div>
<div class="t" style="left:212.7px;top:327.96px;color:#000;font-size:10.5px;text-shadow:0 0 0.5px rgba(0,0,0,0.55);letter-spacing:0.3px">0.532</div>
<div class="t" style="left:268.3px;top:327.96px;color:#000;font-size:10.5px;text-shadow:0 0 0.5px rgba(0,0,0,0.55);letter-spacing:0.3px">0.11</div>
<div class="t" style="left:303.2px;top:327.96px;color:#000;font-size:10.5px;text-shadow:0 0 0.5px rgba(0,0,0,0.55);letter-spacing:0.3px">1.52</div>
<div style="left:143px;top:356px;width:234px;height:1px;background:#d4d4d4"></div>
<div style="left:143px;top:343px;width:1px;height:14px;background:#dcdcdc"></div>
<div style="left:155px;top:343px;width:1px;height:14px;background:#dcdcdc"></div>
<div style="left:210px;top:343px;width:1px;height:14px;background:#dcdcdc"></div>
<div style="left:265px;top:343px;width:1px;height:14px;background:#dcdcdc"></div>
<div style="left:300px;top:343px;width:1px;height:14px;background:#dcdcdc"></div>
<div style="left:130px;top:344px;width:9px;height:9px;background:#fff;border:1px solid #202020;box-sizing:border-box"></div>
<div class="t" style="left:145.5px;top:341.96px;color:#000;font-size:10.5px;text-shadow:0 0 0.5px rgba(0,0,0,0.55);">5</div>
<div class="t" style="left:156px;top:341.96px;color:#000;font-size:10.5px;text-shadow:0 0 0.5px rgba(0,0,0,0.55);letter-spacing:0.3px">\'Jupiter\'</div>
<div class="t" style="left:212.7px;top:341.96px;color:#000;font-size:10.5px;text-shadow:0 0 0.5px rgba(0,0,0,0.55);letter-spacing:0.8px">11.209</div>
<div class="t" style="left:268.3px;top:341.96px;color:#000;font-size:10.5px;text-shadow:0 0 0.5px rgba(0,0,0,0.55);letter-spacing:0.3px">317.8</div>
<div class="t" style="left:303.2px;top:341.96px;color:#000;font-size:10.5px;text-shadow:0 0 0.5px rgba(0,0,0,0.55);letter-spacing:0.3px">5.2</div>
<div style="left:143px;top:370px;width:234px;height:1px;background:#d4d4d4"></div>
<div style="left:143px;top:357px;width:1px;height:14px;background:#dcdcdc"></div>
<div style="left:155px;top:357px;width:1px;height:14px;background:#dcdcdc"></div>
<div style="left:210px;top:357px;width:1px;height:14px;background:#dcdcdc"></div>
<div style="left:265px;top:357px;width:1px;height:14px;background:#dcdcdc"></div>
<div style="left:300px;top:357px;width:1px;height:14px;background:#dcdcdc"></div>
<div style="left:130px;top:358px;width:9px;height:9px;background:#fff;border:1px solid #202020;box-sizing:border-box"></div>
<div class="t" style="left:145.5px;top:355.96px;color:#000;font-size:10.5px;text-shadow:0 0 0.5px rgba(0,0,0,0.55);">6</div>
<div class="t" style="left:156px;top:355.96px;color:#000;font-size:10.5px;text-shadow:0 0 0.5px rgba(0,0,0,0.55);letter-spacing:0.3px">\'Saturn\'</div>
<div class="t" style="left:212.7px;top:355.96px;color:#000;font-size:10.5px;text-shadow:0 0 0.5px rgba(0,0,0,0.55);letter-spacing:0.3px">9.449</div>
<div class="t" style="left:268.3px;top:355.96px;color:#000;font-size:10.5px;text-shadow:0 0 0.5px rgba(0,0,0,0.55);letter-spacing:0.3px">95.2</div>
<div class="t" style="left:303.2px;top:355.96px;color:#000;font-size:10.5px;text-shadow:0 0 0.5px rgba(0,0,0,0.55);letter-spacing:0.3px">9.54</div>
<div style="left:143px;top:384px;width:234px;height:1px;background:#d4d4d4"></div>
<div style="left:143px;top:371px;width:1px;height:14px;background:#dcdcdc"></div>
<div style="left:155px;top:371px;width:1px;height:14px;background:#dcdcdc"></div>
<div style="left:210px;top:371px;width:1px;height:14px;background:#dcdcdc"></div>
<div style="left:265px;top:371px;width:1px;height:14px;background:#dcdcdc"></div>
<div style="left:300px;top:371px;width:1px;height:14px;background:#dcdcdc"></div>
<div style="left:130px;top:372px;width:9px;height:9px;background:#fff;border:1px solid #202020;box-sizing:border-box"></div>
<div class="t" style="left:145.5px;top:369.96px;color:#000;font-size:10.5px;text-shadow:0 0 0.5px rgba(0,0,0,0.55);">7</div>
<div class="t" style="left:156px;top:369.96px;color:#000;font-size:10.5px;text-shadow:0 0 0.5px rgba(0,0,0,0.55);letter-spacing:0.3px">\'Uranus\'</div>
<div class="t" style="left:212.7px;top:369.96px;color:#000;font-size:10.5px;text-shadow:0 0 0.5px rgba(0,0,0,0.55);letter-spacing:0.3px">4.007</div>
<div class="t" style="left:268.3px;top:369.96px;color:#000;font-size:10.5px;text-shadow:0 0 0.5px rgba(0,0,0,0.55);letter-spacing:0.3px">14.6</div>
<div class="t" style="left:303.2px;top:369.96px;color:#000;font-size:10.5px;text-shadow:0 0 0.5px rgba(0,0,0,0.55);letter-spacing:0.3px">19.22</div>
<div style="left:143px;top:398px;width:234px;height:1px;background:#d4d4d4"></div>
<div style="left:143px;top:385px;width:1px;height:14px;background:#dcdcdc"></div>
<div style="left:155px;top:385px;width:1px;height:14px;background:#dcdcdc"></div>
<div style="left:210px;top:385px;width:1px;height:14px;background:#dcdcdc"></div>
<div style="left:265px;top:385px;width:1px;height:14px;background:#dcdcdc"></div>
<div style="left:300px;top:385px;width:1px;height:14px;background:#dcdcdc"></div>
<div style="left:130px;top:386px;width:9px;height:9px;background:#fff;border:1px solid #202020;box-sizing:border-box"></div>
<div class="t" style="left:145.5px;top:383.96px;color:#000;font-size:10.5px;text-shadow:0 0 0.5px rgba(0,0,0,0.55);">8</div>
<div class="t" style="left:156px;top:383.96px;color:#000;font-size:10.5px;text-shadow:0 0 0.5px rgba(0,0,0,0.55);letter-spacing:0.3px">\'Neptune\'</div>
<div class="t" style="left:212.7px;top:383.96px;color:#000;font-size:10.5px;text-shadow:0 0 0.5px rgba(0,0,0,0.55);letter-spacing:0.3px">3.883</div>
<div class="t" style="left:268.3px;top:383.96px;color:#000;font-size:10.5px;text-shadow:0 0 0.5px rgba(0,0,0,0.55);letter-spacing:0.3px">17.2</div>
<div class="t" style="left:303.2px;top:383.96px;color:#000;font-size:10.5px;text-shadow:0 0 0.5px rgba(0,0,0,0.55);letter-spacing:0.3px">30.06</div>
<svg style="left:580px;top:418px" width="11" height="11" viewBox="0 0 11 11"><g shape-rendering="crispEdges"><rect x="10" y="0" width="1" height="1" fill="#ffffff"/><rect x="9" y="1" width="1" height="1" fill="#ffffff"/><rect x="10" y="1" width="1" height="1" fill="#000000"/><rect x="8" y="2" width="1" height="1" fill="#ffffff"/><rect x="9" y="2" width="1" height="1" fill="#000000"/><rect x="10" y="2" width="1" height="1" fill="#404040"/><rect x="7" y="3" width="1" height="1" fill="#ffffff"/><rect x="8" y="3" width="1" height="1" fill="#000000"/><rect x="9" y="3" width="1" height="1" fill="#404040"/><rect x="10" y="3" width="1" height="1" fill="#ffffff"/><rect x="6" y="4" width="1" height="1" fill="#ffffff"/><rect x="7" y="4" width="1" height="1" fill="#000000"/><rect x="8" y="4" width="1" height="1" fill="#404040"/><rect x="9" y="4" width="1" height="1" fill="#ffffff"/><rect x="10" y="4" width="1" height="1" fill="#000000"/><rect x="5" y="5" width="1" height="1" fill="#ffffff"/><rect x="6" y="5" width="1" height="1" fill="#000000"/><rect x="7" y="5" width="1" height="1" fill="#404040"/><rect x="8" y="5" width="1" height="1" fill="#ffffff"/><rect x="9" y="5" width="1" height="1" fill="#000000"/><rect x="10" y="5" width="1" height="1" fill="#404040"/><rect x="4" y="6" width="1" height="1" fill="#ffffff"/><rect x="5" y="6" width="1" height="1" fill="#000000"/><rect x="6" y="6" width="1" height="1" fill="#404040"/><rect x="7" y="6" width="1" height="1" fill="#ffffff"/><rect x="8" y="6" width="1" height="1" fill="#000000"/><rect x="9" y="6" width="1" height="1" fill="#404040"/><rect x="10" y="6" width="1" height="1" fill="#ffffff"/><rect x="3" y="7" width="1" height="1" fill="#ffffff"/><rect x="4" y="7" width="1" height="1" fill="#000000"/><rect x="5" y="7" width="1" height="1" fill="#404040"/><rect x="6" y="7" width="1" height="1" fill="#ffffff"/><rect x="7" y="7" width="1" height="1" fill="#000000"/><rect x="8" y="7" width="1" height="1" fill="#404040"/><rect x="9" y="7" width="1" height="1" fill="#ffffff"/><rect x="10" y="7" width="1" height="1" fill="#000000"/><rect x="2" y="8" width="1" height="1" fill="#ffffff"/><rect x="3" y="8" width="1" height="1" fill="#000000"/><rect x="4" y="8" width="1" height="1" fill="#404040"/><rect x="5" y="8" width="1" height="1" fill="#ffffff"/><rect x="6" y="8" width="1" height="1" fill="#000000"/><rect x="7" y="8" width="1" height="1" fill="#404040"/><rect x="8" y="8" width="1" height="1" fill="#ffffff"/><rect x="9" y="8" width="1" height="1" fill="#000000"/><rect x="10" y="8" width="1" height="1" fill="#404040"/><rect x="1" y="9" width="1" height="1" fill="#ffffff"/><rect x="2" y="9" width="1" height="1" fill="#000000"/><rect x="3" y="9" width="1" height="1" fill="#404040"/><rect x="4" y="9" width="1" height="1" fill="#ffffff"/><rect x="5" y="9" width="1" height="1" fill="#000000"/><rect x="6" y="9" width="1" height="1" fill="#404040"/><rect x="7" y="9" width="1" height="1" fill="#ffffff"/><rect x="8" y="9" width="1" height="1" fill="#000000"/><rect x="9" y="9" width="1" height="1" fill="#404040"/><rect x="10" y="9" width="1" height="1" fill="#ffffff"/><rect x="0" y="10" width="1" height="1" fill="#ffffff"/><rect x="1" y="10" width="1" height="1" fill="#000000"/><rect x="2" y="10" width="1" height="1" fill="#404040"/><rect x="3" y="10" width="1" height="1" fill="#ffffff"/><rect x="4" y="10" width="1" height="1" fill="#000000"/><rect x="5" y="10" width="1" height="1" fill="#404040"/><rect x="6" y="10" width="1" height="1" fill="#ffffff"/><rect x="7" y="10" width="1" height="1" fill="#000000"/><rect x="8" y="10" width="1" height="1" fill="#404040"/><rect x="9" y="10" width="1" height="1" fill="#ffffff"/><rect x="10" y="10" width="1" height="1" fill="#000000"/></g></svg>
</body></html>
